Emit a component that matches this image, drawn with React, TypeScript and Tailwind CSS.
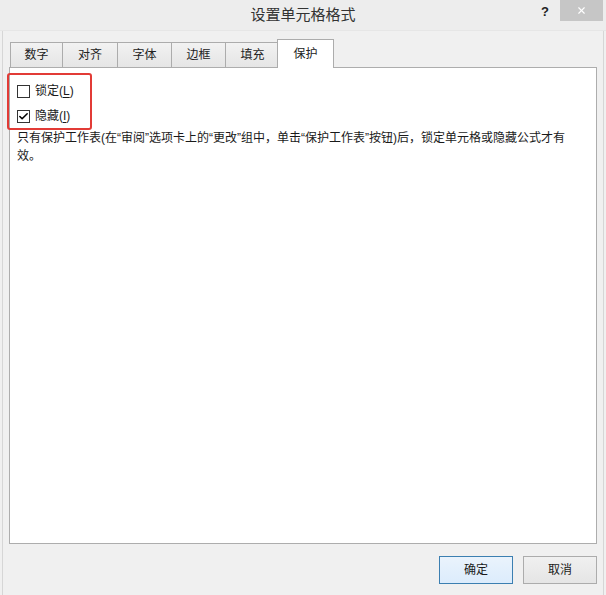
import { Check, X } from "lucide-react";

const TABS = [
  { label: "数字", w: "w-[53px]" },
  { label: "对齐", w: "w-[56px]" },
  { label: "字体", w: "w-[55px]" },
  { label: "边框", w: "w-[55px]" },
  { label: "填充", w: "w-[55px]" },
];

function Checkbox({ checked }: { checked?: boolean }) {
  return (
    <span className="flex h-[13px] w-[13px] items-center justify-center border border-[#333333] bg-white">
      {checked && <Check className="h-[11px] w-[11px] text-black" strokeWidth={3.4} />}
    </span>
  );
}

export default function App() {
  return (
    <div
      className="flex h-[595px] w-[606px] flex-col bg-[#f0f0f0] text-[12px] text-[#1a1a1a]"
      style={{ fontFamily: '"Liberation Sans", "Noto Sans CJK SC", sans-serif' }}
    >
      {/* Title bar */}
      <div className="relative flex h-[31px] shrink-0 items-center justify-center border-b border-[#e6e6e6] bg-[#ededed]">
        <span className="text-[15px] text-[#333333]">设置单元格格式</span>
        <span className="absolute left-[541px] top-[2px] text-[13px] font-bold text-[#222222]">?</span>
        <div className="absolute left-[560px] top-0 flex h-[21px] w-[43px] items-center justify-center bg-[#c6c6c6]">
          <X className="h-[11px] w-[11px] text-white" strokeWidth={2.5} />
        </div>
      </div>

      {/* Body */}
      <div className="ml-[2px] mr-[2px] flex flex-1 flex-col border-l border-r border-[#d6d6d6] pl-[6px] pr-[6px]">
        {/* Tabs */}
        <div className="mt-[8px] ml-[1px] flex h-[28px] items-end">
          {TABS.map((t) => (
            <div
              key={t.label}
              className={`${t.w} -mr-px flex h-[25px] items-center justify-center border border-b-0 border-[#acacac] bg-gradient-to-b from-[#f2f2f2] to-[#e5e5e5] text-[#222222]`}
            >
              {t.label}
            </div>
          ))}
          <div className="relative z-10 -mb-px -ml-[2px] flex h-[29px] w-[57px] items-center justify-center border border-b-0 border-[#acacac] bg-white text-[#222222]">
            保护
          </div>
        </div>

        {/* Panel */}
        <div className="relative h-[477px] border border-[#adadad] bg-white pl-[7px] pt-[13px]">
          <div className="flex h-[20px] items-center gap-[5px]">
            <Checkbox />
            <span>
              锁定(<span className="underline underline-offset-2">L</span>)
            </span>
          </div>
          <div className="mt-[5px] flex h-[20px] items-center gap-[5px]">
            <Checkbox checked />
            <span>
              隐藏(<span className="underline underline-offset-2">I</span>)
            </span>
          </div>
          <p className="mt-[3px] w-[558px] leading-[18px]">
            只有保护工作表(在“审阅”选项卡上的“更改”组中，单击“保护工作表”按钮)后，锁定单元格或隐藏公式才有效。
          </p>

          {/* red annotation frame */}
          <div className="pointer-events-none absolute left-[-3px] top-[5px] h-[57px] w-[85px] rounded-[3px] border-2 border-[#e23b36]" />
        </div>

        {/* Buttons */}
        <div className="mt-[12px] flex justify-end gap-[10px]">
          <button className="h-[28px] w-[74px] border border-[#3c7fb1] bg-gradient-to-b from-[#eaf3fc] to-[#dcecfc] text-[#1a1a1a]">
            确定
          </button>
          <button className="h-[28px] w-[74px] border border-[#acacac] bg-gradient-to-b from-[#f0f0f0] to-[#e5e5e5] text-[#1a1a1a]">
            取消
          </button>
        </div>
      </div>
    </div>
  );
}
